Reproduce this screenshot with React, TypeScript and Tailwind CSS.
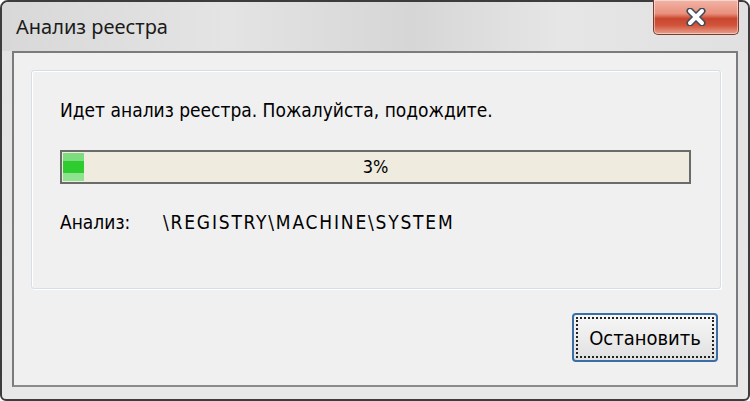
import React from "react";

function CloseX() {
  return (
    <svg width="22" height="18" viewBox="0 0 22 18">
      <path d="M5 3 L17 15 M17 3 L5 15" stroke="#3e4a5a" strokeWidth="7" strokeLinecap="round" />
      <path d="M5 3 L17 15 M17 3 L5 15" stroke="#ffffff" strokeWidth="4" strokeLinecap="round" />
    </svg>
  );
}

export default function App() {
  return (
    <div className="w-[750px] h-[401px] bg-white overflow-hidden">
      <div
        className="w-[750px] h-[401px] flex flex-col rounded-t-[8px] rounded-b-[6px] border-2 border-[#3c3c3c] bg-[linear-gradient(180deg,#dcdcdc_0%,#e2e2e2_10%,#e8e8e8_100%)]"
        style={{ fontFamily: '"DejaVu Sans Condensed", "DejaVu Sans", sans-serif', fontStretch: "condensed" }}
      >
        {/* title bar */}
        <div className="h-[49px] flex items-start justify-between bg-[linear-gradient(90deg,#d8d8d8_0%,#e4e4e4_30%,#d6d6d6_55%,#e6e6e6_75%,#e0e0e0_100%)] rounded-t-[6px]">
          <div
            className="pl-[14px] pt-[13px] text-[20px] leading-[24px] text-[#1b1b1b]"
            style={{ fontFamily: '"Noto Sans", sans-serif', fontStretch: "normal" }}
          >
            Анализ реестра
          </div>
          <div className="mr-[9px] w-[86px] h-[35px] -mt-[2px] rounded-b-[5px] border border-[#7a3a30] border-t-0 bg-[linear-gradient(180deg,#f2b4a6_0%,#e8907c_40%,#c8452e_55%,#d2553c_75%,#e9a08e_100%)] flex items-center justify-center shadow-[inset_0_0_0_1px_rgba(255,255,255,0.45)]">
            <CloseX />
          </div>
        </div>
        {/* client */}
        <div className="mx-[10px] flex-1 mb-[12px] border-2 border-[#7b7b7b] border-b-[#8a8a8a] bg-[#f0f0f0] flex flex-col">
          <div className="ml-[17px] mr-[15px] mt-[17px] h-[219px] rounded-[3px] border border-[#d5dfe5] shadow-[inset_1px_1px_0_#ffffff,1px_1px_0_#ffffff] flex flex-col pl-[28px]">
            <div className="mt-[27px] text-[19px] leading-[24px] text-black">
              Идет анализ реестра. Пожалуйста, подождите.
            </div>
            <div className="mt-[28px] w-[631px] h-[34px] border-2 border-[#6b6b6b] bg-[#efebdf] relative flex items-center justify-center">
              <div className="absolute left-[1px] top-[1px] w-[21px] h-[28px] flex flex-col">
                <div className="h-[8px] bg-[#7ddc7d]" />
                <div className="h-[12px] bg-[#2ecc2e]" />
                <div className="h-[8px] bg-[#8ee48e]" />
              </div>
              <span className="relative text-[18px] leading-[20px] text-black">3%</span>
            </div>
            <div className="mt-[26px] flex text-[19px] leading-[24px] text-black">
              <span className="w-[103px]">Анализ:</span>
              <span className="tracking-[1.8px]">\REGISTRY\MACHINE\SYSTEM</span>
            </div>
          </div>
          <div className="flex justify-end mr-[18px] mt-[24px]">
            <div className="w-[146px] h-[49px] rounded-[4px] border-2 border-[#3a6ea5] bg-[linear-gradient(180deg,#f6f6f6_0%,#ececec_50%,#e0e0e0_100%)] p-[2px]">
              <div className="w-full h-full border-2 border-dotted border-[#222] flex items-center justify-center text-[20px] text-black">
                Остановить
              </div>
            </div>
          </div>
        </div>
      </div>
    </div>
  );
}
